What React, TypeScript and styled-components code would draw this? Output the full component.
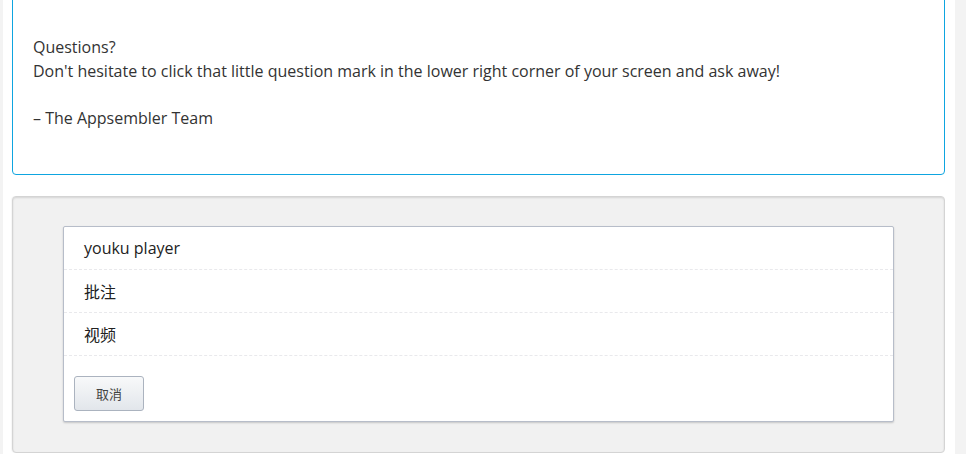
import { FC } from 'react';
import styled, { createGlobalStyle } from 'styled-components';

const GlobalStyle = createGlobalStyle`
  html, body {
    margin: 0;
    padding: 0;
    background: #fff;
    overflow: hidden;
  }
  body {
    font-family: "Open Sans", "Noto Sans CJK SC", sans-serif;
    color: #333;
  }
`;

const Styled = {
  Page: styled.div`
    display: flex;
    height: 454px;
    overflow: hidden;
  `,
  Gutter: styled.div<{ w: number }>`
    flex: 0 0 ${({ w }) => w}px;
    background: #f3f3f3;
  `,
  Main: styled.main`
    flex: 1;
    padding: 0 10px 0 9px;
    background: #fff;
  `,
  Card: styled.section`
    margin-top: -4px;
    border: 1px solid #0ea5e0;
    border-radius: 4px;
    padding: 39px 20px 44px;
    font-size: 16px;
    line-height: 23.6px;
    color: #333;
  `,
  Line: styled.p`
    margin: 0;
    min-height: 23.6px;
  `,
  Panel: styled.section`
    margin-top: 21px;
    border: 1px solid #d4d4d4;
    border-radius: 4px;
    background: #f1f1f1;
    box-shadow: inset 0 1px 2px rgba(0, 0, 0, 0.12), -1px 0 0 rgba(0, 0, 0, 0.03);
    padding: 29px 50px 30px;
  `,
  Dialog: styled.div`
    background: #fff;
    border: 1px solid #b7bdc9;
    border-radius: 2px;
    box-shadow: 0 1px 2px rgba(0, 0, 0, 0.18);
  `,
  Option: styled.div`
    height: 42px;
    display: flex;
    align-items: center;
    padding-left: 20px;
    border-bottom: 1px dashed #e9e9ec;
    font-size: 16px;
    color: #222;
  `,
  Footer: styled.div`
    padding: 20px 10px 10px;
  `,
  Button: styled.button`
    width: 70px;
    height: 35px;
    border: 1px solid #abb3bf;
    border-radius: 3px;
    background: linear-gradient(#f8f9fa, #e2e6eb);
    font-family: "Open Sans", "Noto Sans CJK SC", sans-serif;
    font-size: 13px;
    color: #444;
    cursor: pointer;
  `,
};

const options = ['youku player', '批注', '视频'];

const App: FC = () => (
  <>
    <GlobalStyle />
    <Styled.Page>
      <Styled.Gutter w={3} />
      <Styled.Main>
        <Styled.Card>
          <Styled.Line>Questions?</Styled.Line>
          <Styled.Line>
            Don't hesitate to click that little question mark in the lower right corner of your screen and ask away!
          </Styled.Line>
          <Styled.Line />
          <Styled.Line>– The Appsembler Team</Styled.Line>
        </Styled.Card>
        <Styled.Panel>
          <Styled.Dialog>
            {options.map((o) => (
              <Styled.Option key={o}>{o}</Styled.Option>
            ))}
            <Styled.Footer>
              <Styled.Button>取消</Styled.Button>
            </Styled.Footer>
          </Styled.Dialog>
        </Styled.Panel>
      </Styled.Main>
      <Styled.Gutter w={11} />
    </Styled.Page>
  </>
);

export default App;
